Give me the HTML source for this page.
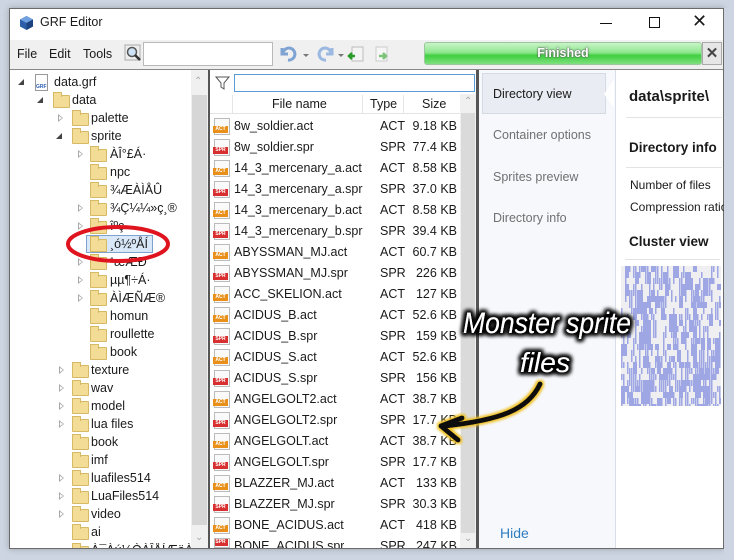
<!DOCTYPE html>
<html><head><meta charset="utf-8"><style>
*{margin:0;padding:0;box-sizing:border-box}
body{width:734px;height:560px;background:#cdd5e2;position:relative;overflow:hidden;font-family:"Liberation Sans",sans-serif;font-size:12px;color:#1a1a1a}
.a{position:absolute;white-space:nowrap}
.win{position:absolute;left:9px;top:8px;width:715px;height:541px;background:#fff;border:1px solid #6b6b6b;box-shadow:0 0 6px rgba(0,0,0,.25)}
.fold{position:absolute;width:17px;height:13px;background:#f3dc95;border:1px solid #d6b964;border-radius:1px}
.fold:before{content:"";position:absolute;left:-1px;top:-4px;width:7px;height:4px;background:#f3dc95;border:1px solid #d6b964;border-bottom:none}
.exp{position:absolute;width:0;height:0;border-top:4px solid transparent;border-bottom:4px solid transparent;border-left:5px solid #a8a8a8}
.exp:after{content:"";position:absolute;left:-4px;top:-2.5px;border-top:2.5px solid transparent;border-bottom:2.5px solid transparent;border-left:3px solid #fff}
.dn{position:absolute;width:0;height:0;border-left:6px solid transparent;border-bottom:6px solid #444}
.fi{position:absolute;left:214px;width:16px;height:17px;border:1px solid #bbb;background:#fafafa}
.fi span{position:absolute;left:-2px;bottom:1px;width:15px;height:7px;font-size:5px;line-height:7px;color:#fff;font-weight:bold;text-align:center}
.act span{background:#e8901a}.spr span{background:#d83030}
.tx{font-size:12.5px}
</style></head><body>
<div class="win"></div>
<svg class="a" style="left:19px;top:15px" width="15" height="16" viewBox="0 0 15 16"><path d="M7.5 1L14 4.5V11.5L7.5 15L1 11.5V4.5Z" fill="#2c5fa8"/><path d="M7.5 1L14 4.5L7.5 8L1 4.5Z" fill="#6fa0e0"/><path d="M7.5 8V15L14 11.5V4.5Z" fill="#1d4280"/></svg>
<div class="a" style="left:40px;top:15px;font-size:12.5px">GRF Editor</div>
<div class="a" style="left:600px;top:23px;width:12px;height:1px;background:#111"></div>
<div class="a" style="left:649px;top:17px;width:11px;height:11px;border:1px solid #111"></div>
<div class="a" style="left:692px;top:11px;font-size:18px;line-height:20px">✕</div>
<div class="a" style="left:10px;top:40px;width:713px;height:30px;background:#f0f0f0"></div>
<div class="a tx" style="left:17px;top:47px">File</div>
<div class="a tx" style="left:49px;top:47px">Edit</div>
<div class="a tx" style="left:83px;top:47px">Tools</div>
<svg class="a" style="left:124px;top:44px" width="18" height="18"><rect x="1" y="1" width="15" height="15" fill="#eee" stroke="#aaa"/><circle cx="8" cy="8" r="4.5" fill="#cfe3f7" stroke="#555" stroke-width="1.5"/><path d="M11 11L16 16" stroke="#333" stroke-width="2.5"/></svg>
<div class="a" style="left:143px;top:42px;width:130px;height:24px;background:#fff;border:1px solid #b9b9b9"></div>
<svg class="a" style="left:278px;top:44px" width="115" height="20"><path d="M4 4v6h6" fill="none" stroke="#7fa4d4" stroke-width="3"/><path d="M5 9a6 6 0 1 1 5 7" fill="none" stroke="#7fa4d4" stroke-width="3"/><path d="M25 10l3 3 3-3z" fill="#777"/><path d="M54 4v6h-6" fill="none" stroke="#9ab8e0" stroke-width="3"/><path d="M53 9a6 6 0 1 0-5 7" fill="none" stroke="#9ab8e0" stroke-width="3"/><path d="M60 10l3 3 3-3z" fill="#777"/><rect x="74" y="3" width="11" height="14" fill="#f4f4f4" stroke="#bbb"/><path d="M71 12h6m-3-3l-3 3 3 3" stroke="#2a9a2a" stroke-width="2.5" fill="none"/><rect x="98" y="3" width="11" height="14" fill="#f6f6f6" stroke="#ccc"/><path d="M101 12h7m-3-3l3 3-3 3" stroke="#7cc47c" stroke-width="2.5" fill="none"/></svg>
<div class="a" style="left:424px;top:42px;width:278px;height:23px;border:1px solid #9cc79c;border-radius:3px;background:linear-gradient(#c8f4c8,#8fe88f 45%,#3fcf3f 60%,#7fe07f)"></div>
<div class="a" style="left:424px;top:46px;width:278px;text-align:center;color:#fff;font-weight:bold;font-size:12.5px;text-shadow:0 0 2px #555,0 0 1px #333">Finished</div>
<div class="a" style="left:702px;top:42px;width:20px;height:23px;background:#e6e6e6;border:1px solid #aaa;text-align:center;font-size:15px;line-height:21px;font-weight:bold;color:#444">✕</div>
<div class="a" style="left:10px;top:69px;width:713px;height:1px;background:#888"></div>
<div class="a" style="left:208px;top:70px;width:2px;height:478px;background:#555"></div>
<div class="a" style="left:476px;top:70px;width:3px;height:478px;background:#555"></div>
<div class="a" style="left:191px;top:70px;width:17px;height:478px;background:#f0f0f0"></div>
<div class="a" style="left:192px;top:95px;width:15px;height:430px;background:#d6d6d6"></div>
<div class="a" style="left:194px;top:76px;font-size:10px;color:#aaa">⌃</div>
<div class="a" style="left:195px;top:532px;font-size:10px;color:#aaa">⌄</div>
<div class="dn" style="left:18px;top:79px"></div>
<div class="a" style="left:35px;top:74px;width:13px;height:17px;border:1px solid #999;background:#fff;font-size:5px;color:#2a5db0;font-weight:bold;padding-top:9px">GRF</div>
<div class="a tx" style="left:54px;top:75px">data.grf</div>
<div class="dn" style="left:37px;top:97px"></div>
<div class="fold" style="left:53px;top:95px"></div><div class="a tx" style="left:72px;top:93px">data</div>
<div class="exp" style="left:58px;top:114px"></div><div class="fold" style="left:72px;top:113px"></div><div class="a tx" style="left:91px;top:111px">palette</div>
<div class="dn" style="left:56px;top:133px"></div><div class="fold" style="left:72px;top:131px"></div><div class="a tx" style="left:91px;top:129px">sprite</div>
<div class="exp" style="left:78px;top:150px"></div><div class="fold" style="left:90px;top:149px"></div><div class="a tx" style="left:110px;top:147px">ÀÎ°£Á·</div>
<div class="fold" style="left:90px;top:167px"></div><div class="a tx" style="left:110px;top:165px">npc</div>
<div class="fold" style="left:90px;top:185px"></div><div class="a tx" style="left:110px;top:183px">¾ÆÀÌÅÛ</div>
<div class="exp" style="left:78px;top:204px"></div><div class="fold" style="left:90px;top:203px"></div><div class="a tx" style="left:110px;top:201px">¾Ç¼¼»ç¸®</div>
<div class="exp" style="left:78px;top:222px"></div><div class="fold" style="left:90px;top:221px"></div><div class="a tx" style="left:110px;top:219px">îºç</div>
<div class="a" style="left:86px;top:235px;width:67px;height:18px;background:#d9e8f8;border:1px solid #7da2ce"></div>
<div class="fold" style="left:90px;top:239px"></div><div class="a tx" style="left:110px;top:237px">¸ó½ºÅÍ</div>
<div class="exp" style="left:78px;top:258px"></div><div class="fold" style="left:90px;top:257px"></div><div class="a tx" style="left:110px;top:255px">¹æÆÐ</div>
<div class="exp" style="left:78px;top:276px"></div><div class="fold" style="left:90px;top:275px"></div><div class="a tx" style="left:110px;top:273px">µµ¶÷Á·</div>
<div class="exp" style="left:78px;top:294px"></div><div class="fold" style="left:90px;top:293px"></div><div class="a tx" style="left:110px;top:291px">ÀÌÆÑÆ®</div>
<div class="fold" style="left:90px;top:311px"></div><div class="a tx" style="left:110px;top:309px">homun</div>
<div class="fold" style="left:90px;top:329px"></div><div class="a tx" style="left:110px;top:327px">roullette</div>
<div class="fold" style="left:90px;top:347px"></div><div class="a tx" style="left:110px;top:345px">book</div>
<div class="exp" style="left:59px;top:366px"></div><div class="fold" style="left:72px;top:365px"></div><div class="a tx" style="left:91px;top:363px">texture</div>
<div class="exp" style="left:59px;top:384px"></div><div class="fold" style="left:72px;top:383px"></div><div class="a tx" style="left:91px;top:381px">wav</div>
<div class="exp" style="left:59px;top:402px"></div><div class="fold" style="left:72px;top:401px"></div><div class="a tx" style="left:91px;top:399px">model</div>
<div class="exp" style="left:59px;top:420px"></div><div class="fold" style="left:72px;top:419px"></div><div class="a tx" style="left:91px;top:417px">lua files</div>
<div class="fold" style="left:72px;top:437px"></div><div class="a tx" style="left:91px;top:435px">book</div>
<div class="fold" style="left:72px;top:455px"></div><div class="a tx" style="left:91px;top:453px">imf</div>
<div class="exp" style="left:59px;top:474px"></div><div class="fold" style="left:72px;top:473px"></div><div class="a tx" style="left:91px;top:471px">luafiles514</div>
<div class="exp" style="left:59px;top:492px"></div><div class="fold" style="left:72px;top:491px"></div><div class="a tx" style="left:91px;top:489px">LuaFiles514</div>
<div class="exp" style="left:59px;top:510px"></div><div class="fold" style="left:72px;top:509px"></div><div class="a tx" style="left:91px;top:507px">video</div>
<div class="fold" style="left:72px;top:527px"></div><div class="a tx" style="left:91px;top:525px">ai</div>
<div class="a" style="left:10px;top:543px;width:181px;height:5px;overflow:hidden"><div class="fold" style="left:62px;top:3px"></div><div class="a tx" style="left:81px;top:0px">À¯Àú¼ÒÀÎÅÍÆäÀÌ½º</div></div>
<svg class="a" style="left:0;top:0" width="734" height="560"><ellipse cx="118" cy="244" rx="50" ry="17" fill="none" stroke="#e0141e" stroke-width="4"/></svg>
<svg class="a" style="left:215px;top:75px" width="16" height="16"><path d="M1 2h13l-5 6v6l-3-2v-4z" fill="none" stroke="#555"/></svg>
<div class="a" style="left:234px;top:74px;width:241px;height:18px;border:1px solid #5a9ad6;background:#fff"></div>
<div class="a" style="left:210px;top:95px;width:250px;height:19px;border-bottom:1px solid #e5e5e5"></div>
<div class="a" style="left:232px;top:95px;width:1px;height:19px;background:#e5e5e5"></div>
<div class="a" style="left:362px;top:95px;width:1px;height:19px;background:#e5e5e5"></div>
<div class="a" style="left:403px;top:95px;width:1px;height:19px;background:#e5e5e5"></div>
<div class="a tx" style="left:272px;top:97px">File name</div>
<div class="a tx" style="left:370px;top:97px">Type</div>
<div class="a tx" style="left:422px;top:97px">Size</div>
<div class="a" style="left:460px;top:94px;width:16px;height:454px;background:#f0f0f0"></div>
<div class="a" style="left:461px;top:113px;width:14px;height:420px;background:#dadada"></div>
<div class="a" style="left:464px;top:96px;font-size:10px;color:#aaa">⌃</div>
<div class="a" style="left:464px;top:533px;font-size:10px;color:#aaa">⌄</div>
<div id="fl"></div>
<div class="a" style="left:479px;top:70px;width:137px;height:478px;background:#f6f8fc;border-right:1px solid #d8dde8"></div>
<div class="a" style="left:482px;top:73px;width:124px;height:41px;background:#e9ecf2;border:1px solid #d6dae2"></div>
<div class="a" style="left:604px;top:80px;width:0;height:0;border-top:14px solid transparent;border-bottom:14px solid transparent;border-right:10px solid #fff"></div>
<div class="a tx" style="left:493px;top:87px">Directory view</div>
<div class="a tx" style="left:493px;top:128px;color:#707070">Container options</div>
<div class="a tx" style="left:493px;top:170px;color:#707070">Sprites preview</div>
<div class="a tx" style="left:493px;top:211px;color:#707070">Directory info</div>
<div class="a" style="left:500px;top:525px;font-size:14px;color:#2e7cc0">Hide</div>
<div class="a" style="left:629px;top:88px;font-size:15px;font-weight:bold">data\sprite\</div>
<div class="a" style="left:626px;top:117px;width:96px;height:1px;background:#e3e3e3"></div>
<div class="a" style="left:629px;top:140px;font-size:13.5px;font-weight:bold">Directory info</div>
<div class="a" style="left:626px;top:167px;width:96px;height:1px;background:#e3e3e3"></div>
<div class="a" style="left:630px;top:178px">Number of files</div>
<div class="a" style="left:630px;top:200px">Compression ratio</div>
<div class="a" style="left:629px;top:234px;font-size:13.5px;font-weight:bold">Cluster view</div>
<div class="a" style="left:625px;top:259px;width:95px;height:1px;background:#e3e3e3"></div>
<div class="a" style="left:724px;top:8px;width:10px;height:552px;background:#cdd5e2"></div>
<svg class="a" style="left:621px;top:266px" width="100" height="140" id="cl"></svg>
<svg class="a" style="left:0;top:0" width="734" height="560">
<defs><filter id="g" x="-20%" y="-40%" width="140%" height="180%"><feMorphology operator="dilate" radius="2" in="SourceAlpha" result="d"/><feGaussianBlur in="d" stdDeviation="2" result="b"/><feFlood flood-color="#000"/><feComposite in2="b" operator="in"/><feMerge><feMergeNode/><feMergeNode/><feMergeNode in="SourceGraphic"/></feMerge></filter>
<filter id="y"><feMorphology operator="dilate" radius="1.5" in="SourceAlpha" result="d"/><feGaussianBlur in="d" stdDeviation="1.2" result="b"/><feFlood flood-color="#f0c020"/><feComposite in2="b" operator="in"/><feMerge><feMergeNode/><feMergeNode in="SourceGraphic"/></feMerge></filter></defs>
<g filter="url(#y)"><path d="M540 384C528 410 500 420 445 426" fill="none" stroke="#111" stroke-width="5" stroke-linecap="round"/><path d="M462 418L441 426L458 440" fill="none" stroke="#111" stroke-width="5" stroke-linecap="round" stroke-linejoin="round"/></g>
<g filter="url(#g)" fill="#fff" font-family="Liberation Sans Narrow,Liberation Sans,sans-serif" font-style="italic"><text x="463" y="333" font-size="30" textLength="168" lengthAdjust="spacingAndGlyphs">Monster sprite</text><text x="520" y="372" font-size="28" textLength="50" lengthAdjust="spacingAndGlyphs">files</text></g>
</svg>
<script>
var f=[["8w_soldier.act","9.18 KB"],["8w_soldier.spr","77.4 KB"],["14_3_mercenary_a.act","8.58 KB"],["14_3_mercenary_a.spr","37.0 KB"],["14_3_mercenary_b.act","8.58 KB"],["14_3_mercenary_b.spr","39.4 KB"],["ABYSSMAN_MJ.act","60.7 KB"],["ABYSSMAN_MJ.spr","226 KB"],["ACC_SKELION.act","127 KB"],["ACIDUS_B.act","52.6 KB"],["ACIDUS_B.spr","159 KB"],["ACIDUS_S.act","52.6 KB"],["ACIDUS_S.spr","156 KB"],["ANGELGOLT2.act","38.7 KB"],["ANGELGOLT2.spr","17.7 KB"],["ANGELGOLT.act","38.7 KB"],["ANGELGOLT.spr","17.7 KB"],["BLAZZER_MJ.act","133 KB"],["BLAZZER_MJ.spr","30.3 KB"],["BONE_ACIDUS.act","418 KB"],["BONE_ACIDUS.spr","247 KB"]];
var h="";f.forEach(function(r,i){var y=118+i*21,a=r[0].slice(-3)=="act";if(y>540)return;
var c=(y+15>548?'height:'+(548-y-1)+'px;overflow:hidden':'');
h+='<div class="fi '+(a?'act':'spr')+'" style="top:'+y+'px;'+(y+17>548?'height:'+(548-y)+'px;overflow:hidden':'')+'"><span>'+(a?'ACT':'SPR')+'</span></div>';
h+='<div class="a tx" style="left:234px;top:'+(y+1)+'px;'+c+'">'+r[0]+'</div>';
h+='<div class="a tx" style="left:380px;top:'+(y+1)+'px;'+c+'">'+(a?'ACT':'SPR')+'</div>';
h+='<div class="a tx" style="left:400px;width:57px;text-align:right;top:'+(y+1)+'px;'+c+'">'+r[1]+'</div>';});
document.getElementById("fl").innerHTML=h;
var s='<rect width="100" height="140" fill="#efeff2"/>',seed=7;function R(){seed=(seed*9301+49297)%233280;return seed/233280}
for(var y=0;y<140;y+=6){var dens=y>95?0.55:0.35;for(var x=0;x<100;x+=2){if(R()<dens){var w=R()<0.25?4:1.5;s+='<rect x="'+x+'" y="'+y+'" width="'+w+'" height="'+(R()<0.5?12:6)+'" fill="#9ea6e4"/>';}}}
document.getElementById("cl").innerHTML=s;
</script>
</body></html>
